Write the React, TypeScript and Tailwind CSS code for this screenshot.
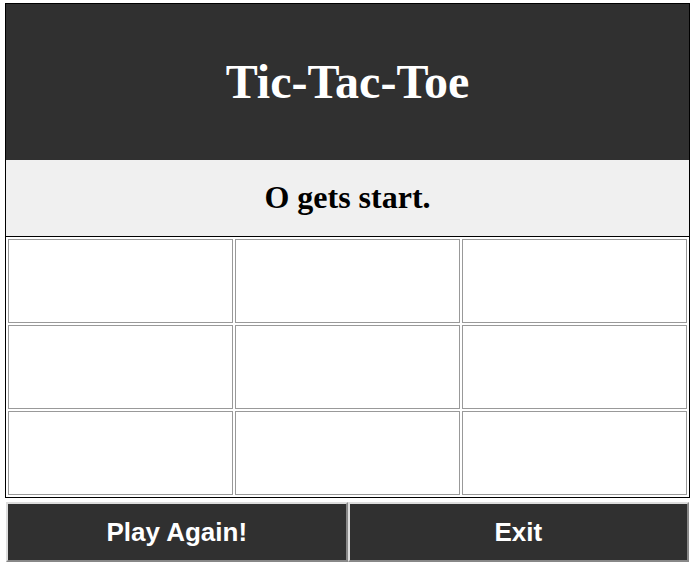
const cells = Array.from({ length: 9 }, (_, i) => i);

const App = () => {
  return (
    <div className="w-[694px] h-[568px] bg-white pt-[3px]">
      <div className="ml-[5px] w-[685px] border border-black">
        <div className="flex h-[156px] items-center justify-center bg-[#303030]">
          <h1 className="font-['Liberation_Serif',serif] text-[48px] font-bold text-white">
            Tic-Tac-Toe
          </h1>
        </div>
        <div className="flex h-[77px] items-center justify-center border-b border-black bg-[#f0f0f0] pb-[3px]">
          <h2 className="font-['Liberation_Serif',serif] text-[32px] font-bold text-black">
            O gets start.
          </h2>
        </div>
        <div className="grid grid-cols-3 gap-[2px] p-[2px]">
          {cells.map((c) => (
            <div key={c} className="h-[84px] border border-[#999999] bg-white" />
          ))}
        </div>
      </div>
      <div className="ml-[6px] mt-[4px] flex w-[683px]">
        <button className="h-[60px] flex-1 border-2 border-t-[#dddddd] border-l-[#dddddd] border-b-[#888888] border-r-[#888888] bg-[#303030] font-['Liberation_Sans',sans-serif] text-[26px] font-bold text-white">
          Play Again!
        </button>
        <button className="h-[60px] flex-1 border-2 border-t-[#dddddd] border-l-[#dddddd] border-b-[#888888] border-r-[#888888] bg-[#303030] font-['Liberation_Sans',sans-serif] text-[26px] font-bold text-white">
          Exit
        </button>
      </div>
    </div>
  );
};

export default App;
